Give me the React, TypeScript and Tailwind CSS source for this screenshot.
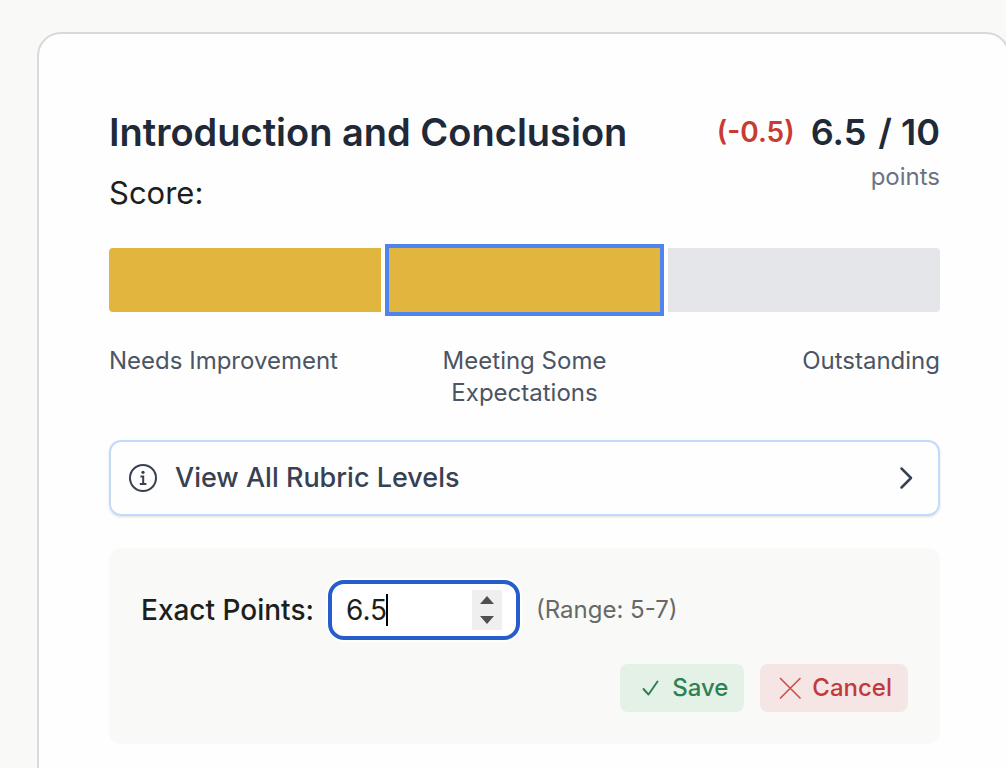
import { useState } from 'react';

const levels = [
  { label: 'Needs Improvement', filled: true, align: 'text-left' },
  { label: 'Meeting Some Expectations', filled: true, align: 'text-center' },
  { label: 'Outstanding', filled: false, align: 'text-right' },
];

function InfoIcon() {
  return (
    <svg className="w-8 h-8 flex-shrink-0" viewBox="0 0 32 32" fill="none" stroke="currentColor" strokeWidth="2">
      <circle cx="16" cy="16" r="13" />
      <path d="M13.5 14.5H16.2V21.5M12.8 22h6.6" />
      <circle cx="16" cy="10.3" r="1.6" fill="currentColor" stroke="none" />
    </svg>
  );
}

export default function App() {
  const [points, setPoints] = useState('6.5');

  return (
    <div className="min-h-screen overflow-hidden bg-[#f9f9f7] pt-8 pl-[37px] font-['Inter',sans-serif]">
      <main className="-mr-1 min-h-[760px] rounded-3xl border-2 border-[#d5dbd7] bg-[#fefefe] pt-[73px] pr-[68px] pl-[70px]">
        {/* Heading and score */}
        <header className="flex items-start justify-between">
          <div>
            <h1 className="text-[38px] leading-[50px] font-semibold text-[#1f2937]">Introduction and Conclusion</h1>
            <p className="mt-4 text-[31px] leading-10 text-[#1c1f1c]">Score:</p>
          </div>
          <div className="text-right">
            <div className="flex items-center gap-4 font-semibold">
              <span className="text-[28px] leading-10 text-[#c93a33]">(-0.5)</span>
              <span className="flex gap-3 text-[36px] leading-[50px] text-[#1f2937]">
                <span>6.5</span>
                <span>/ 10</span>
              </span>
            </div>
            <p className="mt-1 text-2xl leading-8 text-[#6b7280]">points</p>
          </div>
        </header>

        <div className="mt-[35px] flex gap-2">
          {levels.map((level, i) => (
            <div
              key={level.label}
              className={`h-16 flex-1 first:rounded-l last:rounded-r ${
                level.filled ? 'bg-[#e1b53e]' : 'bg-[#e5e6ea]'
              } ${i === 1 ? 'outline-4 outline-[#4f83ee]' : ''}`}
            />
          ))}
        </div>
        <div className="mt-[33px] grid grid-cols-3 text-2xl leading-8 text-[#4b5563]">
          {levels.map((level) => (
            <span key={level.label} className={level.align}>{level.label}</span>
          ))}
        </div>

        <button className="mt-[31px] flex h-[76px] w-full items-center gap-4 rounded-xl border-2 border-[#c3dafb] px-4 text-[27px] font-medium text-[#374151] shadow-sm">
          <InfoIcon />
          <span className="flex-1 text-left">View All Rubric Levels</span>
          <svg className="w-8 h-8" viewBox="0 0 32 32" fill="none" stroke="currentColor" strokeWidth="2.5" strokeLinecap="round" strokeLinejoin="round">
            <path d="m11.5 6.5 9.5 9.5-9.5 9.5" />
          </svg>
        </button>

        {/* Exact points editor */}
        <form className="mt-8 rounded-xl bg-[#f9f9f8] p-8" onSubmit={(e) => e.preventDefault()}>
          <div className="flex items-center">
            <label htmlFor="points" className="text-[28px] font-medium text-[#1c1f1c]">Exact Points:</label>
            <div className="ml-3.5 flex h-[60px] w-48 items-center rounded-2xl border-4 border-[#255ec8] bg-white pr-3.5 pl-3.5 ring-2 ring-white">
              <input
                id="points"
                inputMode="decimal"
                value={points}
                onChange={(e) => setPoints(e.target.value)}
                className="w-10 text-[28px] text-[#1c1f1c] outline-none"
              />
              <span className="h-8 w-0.5 bg-black" />
              <svg className="ml-auto h-10 w-[30px] bg-[#efefef]" viewBox="0 0 30 40" fill="#505050">
                <path d="m15 6 7 8H8zM15 34l7-8H8z" />
              </svg>
            </div>
            <span className="ml-4 text-2xl text-[#666a66]">(Range: 5-7)</span>
          </div>
          <div className="mt-6 flex justify-end gap-4 text-2xl font-medium">
            <button className="flex h-12 items-center gap-2 rounded-lg bg-[#e3f1e6] px-4 text-[#2f8152]">
              <svg className="w-7 h-7" viewBox="0 0 28 28" fill="none" stroke="currentColor" strokeWidth="2" strokeLinecap="round" strokeLinejoin="round">
                <path d="m7.5 15 5 5.5L21.5 7.5" />
              </svg>
              Save
            </button>
            <button className="flex h-12 items-center gap-2 rounded-lg bg-[#f5e6e5] px-4 text-[#c23a38]">
              <svg className="w-7 h-7" viewBox="0 0 28 28" fill="none" stroke="#cb5250" strokeWidth="1.7" strokeLinecap="round">
                <path d="m4.5 4.5 19.5 19.5M24 4.5 4.5 24" />
              </svg>
              Cancel
            </button>
          </div>
        </form>
      </main>
    </div>
  );
}
